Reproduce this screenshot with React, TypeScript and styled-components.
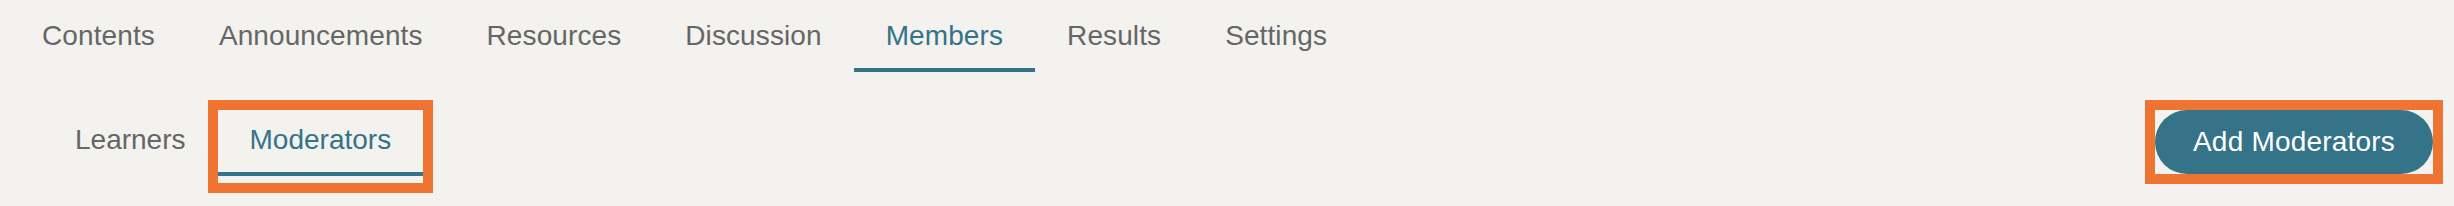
import React from 'react';
import styled, { createGlobalStyle } from 'styled-components';

const GlobalStyle = createGlobalStyle`
  html, body {
    margin: 0;
    padding: 0;
    background-color: #f3f2ef;
    font-family: "Liberation Sans", Arial, Helvetica, sans-serif;
  }
`;

const Page = styled.div`
  width: 100%;
  min-height: 206px;
  background-color: #f3f2ef;
`;

const CourseNav = styled.nav`
  display: flex;
  padding: 0 10px;
`;

const Tab = styled.a<{ $active?: boolean }>`
  display: block;
  padding: 20px 32px 16px;
  font-size: 28px;
  line-height: 32px;
  letter-spacing: 0.1px;
  color: ${props => props.$active ? '#357389' : '#666666'};
  border-bottom: 4px solid ${props => props.$active ? '#357389' : 'transparent'};
  text-decoration: none;
  cursor: pointer;
`;

const Toolbar = styled.div`
  display: flex;
  justify-content: space-between;
  align-items: flex-start;
  margin-top: 38px;
  padding: 0 21px 0 43px;
`;

const SubNav = styled.div`
  display: flex;
`;

const SubTab = styled.a<{ $active?: boolean; $marked?: boolean }>`
  position: relative;
  display: block;
  padding: 14px 32px 16px;
  font-size: 28px;
  line-height: 32px;
  color: ${props => props.$active ? '#357389' : '#666666'};
  border-bottom: 4px solid ${props => props.$active ? '#357389' : 'transparent'};
  text-decoration: none;
  cursor: pointer;

  ${props => props.$marked && `
    &::after {
      content: '';
      position: absolute;
      top: -10px;
      left: -10px;
      right: -10px;
      bottom: -21px;
      border: 10px solid #ef7331;
      pointer-events: none;
    }
  `}
`;

const AddButton = styled.button<{ $marked?: boolean }>`
  position: relative;
  height: 64px;
  padding: 16px 38px;
  border: none;
  border-radius: 32px;
  background-color: #357389;
  color: #ffffff;
  font-family: inherit;
  font-size: 28px;
  line-height: 32px;
  letter-spacing: 0.2px;
  cursor: pointer;

  ${props => props.$marked && `
    &::after {
      content: '';
      position: absolute;
      top: -10px;
      left: -10px;
      right: -10px;
      bottom: -10px;
      border: 10px solid #ef7331;
      pointer-events: none;
    }
  `}
`;

const tabs = ['Contents', 'Announcements', 'Resources', 'Discussion', 'Members', 'Results', 'Settings'];

const App: React.FC = () => {
  return (
    <Page>
      <GlobalStyle />
      <CourseNav>
        {tabs.map(t => (
          <Tab key={t} $active={t === 'Members'}>{t}</Tab>
        ))}
      </CourseNav>
      <Toolbar>
        <SubNav>
          <SubTab>Learners</SubTab>
          <SubTab $active $marked>Moderators</SubTab>
        </SubNav>
        <AddButton $marked>Add Moderators</AddButton>
      </Toolbar>
    </Page>
  );
};

export default App;
